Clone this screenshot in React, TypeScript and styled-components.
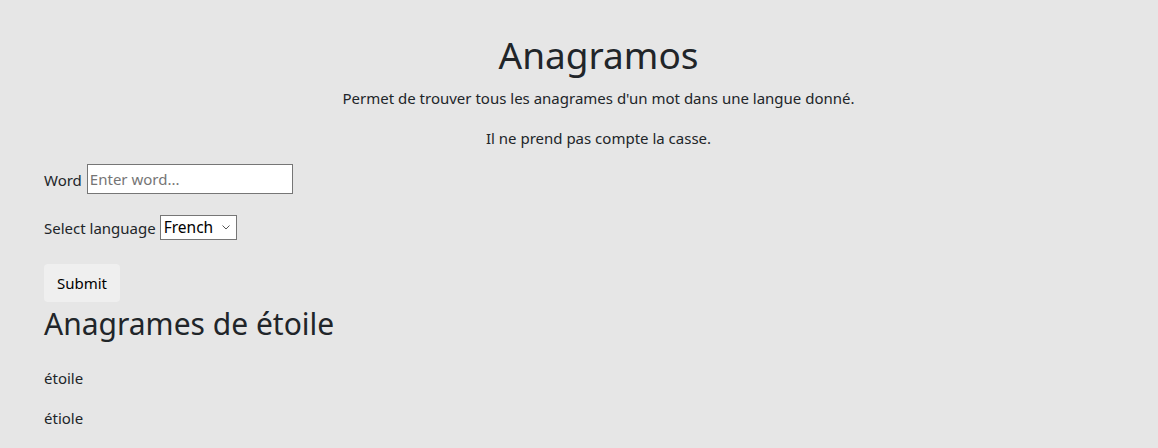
import React, { useState } from 'react'
import styled, { createGlobalStyle } from 'styled-components'

const GlobalStyle = createGlobalStyle`
  html, body {
    margin: 0;
    padding: 0;
    background: #e6e6e6;
  }
  body {
    font-family: 'Noto Sans', 'Open Sans', sans-serif;
    font-size: 15px;
    line-height: 24px;
    color: #212529;
  }
`

const Page = styled.div`
  box-sizing: border-box;
  min-height: 448px;
  padding: 31px 5px 0 44px;
`

const Header = styled.header`
  text-align: center;
`

const Title = styled.h1`
  font-size: 37px;
  font-weight: 400;
  line-height: 47px;
  margin: 0 0 8px;
`

const Lead = styled.p`
  margin: 0 0 16px;
`

const Form = styled.form`
  display: flex;
  flex-direction: column;
  align-items: flex-start;
  margin-top: -2px;
`

const Row = styled.div<{ $gap: number }>`
  display: flex;
  align-items: center;
  gap: 5px;
  margin-bottom: ${(props) => props.$gap}px;
`

const Label = styled.label`
  line-height: 24px;
  padding-top: 1px;
`

const TextInput = styled.input`
  box-sizing: border-box;
  width: 206px;
  height: 30px;
  padding: 1px 2px;
  border: 1px solid #767676;
  background: #fff;
  font: inherit;
  color: #212529;
  outline: none;
  &::placeholder {
    color: #757575;
  }
`

const SelectWrap = styled.div`
  position: relative;
  display: flex;
  margin-left: -1px;
`

const Select = styled.select`
  box-sizing: border-box;
  width: 77px;
  height: 25px;
  border: 1px solid #767676;
  border-radius: 0;
  background: #fff;
  appearance: none;
  font: inherit;
  font-size: 15.5px;
  line-height: 1;
  color: #000;
  padding: 0 3px;
  outline: none;
`

const Chevron = styled.svg`
  position: absolute;
  right: 7px;
  top: 10px;
  pointer-events: none;
`

const SubmitButton = styled.button`
  width: 76px;
  height: 38px;
  border: none;
  border-radius: 4px;
  background: #efefef;
  font: inherit;
  color: #000;
  padding: 0 12px;
  cursor: pointer;
`

const ResultTitle = styled.h2`
  font-size: 30px;
  font-weight: 400;
  line-height: 38px;
  margin: 3px 0 23px;
`

const Result = styled.p`
  margin: 0 0 16px;
`

const anagrams = ['étoile', 'étiole']

export default function App() {
  const [word, setWord] = useState('')
  const [lang, setLang] = useState('fr')

  return (
    <>
      <GlobalStyle />
      <Page>
        <Header>
          <Title>Anagramos</Title>
          <Lead>Permet de trouver tous les anagrames d'un mot dans une langue donné.</Lead>
          <Lead>Il ne prend pas compte la casse.</Lead>
        </Header>
        <Form onSubmit={(e) => e.preventDefault()}>
          <Row $gap={21}>
            <Label htmlFor="word">Word</Label>
            <TextInput
              id="word"
              placeholder="Enter word..."
              value={word}
              onChange={(e) => setWord(e.target.value)}
            />
          </Row>
          <Row $gap={24}>
            <Label htmlFor="lang">Select language</Label>
            <SelectWrap>
              <Select id="lang" value={lang} onChange={(e) => setLang(e.target.value)}>
                <option value="fr">French</option>
                <option value="en">English</option>
                <option value="es">Spanish</option>
              </Select>
              <Chevron width="8" height="5" viewBox="0 0 8 5">
                <path d="M0.5 0.5 L4 4 L7.5 0.5" fill="none" stroke="#555" strokeWidth="1" />
              </Chevron>
            </SelectWrap>
          </Row>
          <SubmitButton type="submit">Submit</SubmitButton>
        </Form>
        <ResultTitle>Anagrames de étoile</ResultTitle>
        {anagrams.map((a) => (
          <Result key={a}>{a}</Result>
        ))}
      </Page>
    </>
  )
}
